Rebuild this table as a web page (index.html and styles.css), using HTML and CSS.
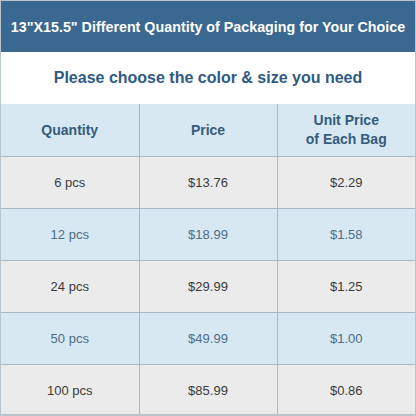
FILE: index.html
```html
<!DOCTYPE html>
<html>

<head>
    <link rel="stylesheet" href="styles.css">
</head>

<body>
    <div class="sheet">
        <header class="title">13"X15.5" Different Quantity of Packaging for Your Choice</header>
        <div class="subtitle">Please choose the color &amp; size you need</div>
        <table class="prices">
            <tr class="head">
                <th>Quantity</th>
                <th>Price</th>
                <th>Unit Price<br>of Each Bag</th>
            </tr>
            <tr class="grey">
                <td>6 pcs</td>
                <td>$13.76</td>
                <td>$2.29</td>
            </tr>
            <tr class="blue">
                <td>12 pcs</td>
                <td>$18.99</td>
                <td>$1.58</td>
            </tr>
            <tr class="grey">
                <td>24 pcs</td>
                <td>$29.99</td>
                <td>$1.25</td>
            </tr>
            <tr class="blue">
                <td>50 pcs</td>
                <td>$49.99</td>
                <td>$1.00</td>
            </tr>
            <tr class="grey">
                <td>100 pcs</td>
                <td>$85.99</td>
                <td>$0.86</td>
            </tr>
        </table>
    </div>
</body>

</html>
```

FILE: styles.css
```css
body {
    margin: 0;
    padding: 0;
    background-color: #e4e8ea;
    font-family: "Liberation Sans", Arial, sans-serif;
}

.sheet {
    width: 416px;
    height: 416px;
    box-sizing: border-box;
    border: 1px solid #b9c4cc;
    border-bottom-width: 2px;
    background-color: #ffffff;
    overflow: hidden;
}

.title {
    height: 51px;
    line-height: 52px;
    background-color: #3b6890;
    color: #ffffff;
    font-weight: bold;
    font-size: 14.3px;
    text-align: center;
    white-space: nowrap;
}

.subtitle {
    height: 52px;
    line-height: 52px;
    color: #2f5b82;
    font-weight: bold;
    font-size: 16px;
    text-align: center;
}

table.prices {
    width: 100%;
    border-collapse: collapse;
    table-layout: fixed;
}

.prices th,
.prices td {
    height: 51px;
    padding: 0;
    text-align: center;
    border: 1px solid #a9b9c8;
}

.prices th {
    height: 52px;
}

.prices tr:first-child th {
    border-top: none;
}

.prices th:first-child,
.prices td:first-child {
    border-left: none;
}

.prices th:last-child,
.prices td:last-child {
    border-right: none;
}

.prices th {
    background-color: #d7e8f2;
    color: #355b7c;
    font-size: 14px;
    line-height: 19px;
}

.prices td {
    font-size: 13px;
}

.grey td {
    background-color: #ebebeb;
    color: #3a3a3a;
}

.blue td {
    background-color: #d7e8f2;
    color: #4d6c86;
}
```
